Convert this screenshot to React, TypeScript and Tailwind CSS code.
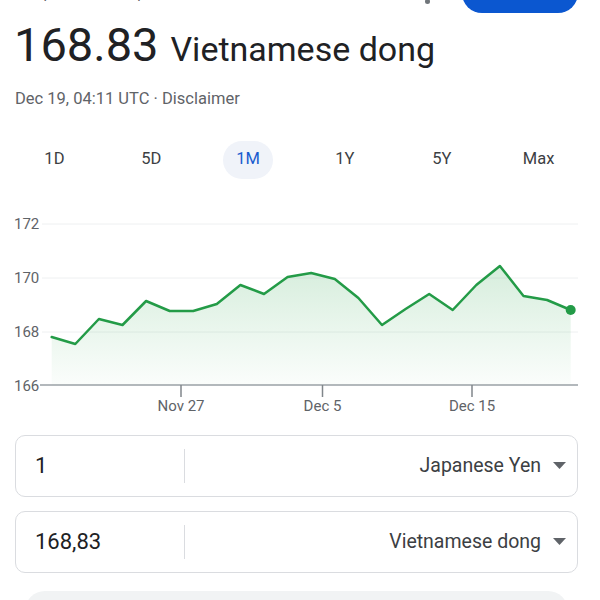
import React from "react";

const YS = [335, 342, 317, 323, 299, 309, 309, 302, 283, 292, 275, 271, 277, 296, 323, 307, 292, 308, 283, 264, 294, 298, 308];
const TOP = 205;
const X0 = 51.7;
const DX = (570.7 - 51.7) / 22;

function Chart() {
  const pts = YS.map((y, i) => [X0 + DX * i, y - TOP] as const);
  const line = pts.map(([x, y], i) => `${i === 0 ? "M" : "L"}${x.toFixed(1)},${y.toFixed(1)}`).join(" ");
  const base = 383 - TOP;
  const area = `${line} L${pts[pts.length - 1][0].toFixed(1)},${base} L${pts[0][0].toFixed(1)},${base} Z`;
  const last = pts[pts.length - 1];
  const labels = [
    { t: "172", y: 222 },
    { t: "170", y: 276 },
    { t: "168", y: 330 },
    { t: "166", y: 384 },
  ];
  const ticks = [
    { t: "Nov 27", x: 181 },
    { t: "Dec 5", x: 322.5 },
    { t: "Dec 15", x: 472 },
  ];
  return (
    <svg width="600" height="215" viewBox="0 0 600 215" className="block">
      <defs>
        <linearGradient id="g" x1="0" y1="0" x2="0" y2="1">
          <stop offset="0" stopColor="#34a853" stopOpacity="0.2" />
          <stop offset="1" stopColor="#34a853" stopOpacity="0.02" />
        </linearGradient>
      </defs>
      {labels.slice(0, 3).map((l) => (
        <line key={l.t} x1="42" x2="578" y1={l.y - TOP} y2={l.y - TOP} stroke="#eef0f1" strokeWidth="1" />
      ))}
      <path d={area} fill="url(#g)" />
      <line x1="40" x2="578" y1={base} y2={base} stroke="#9aa0a6" strokeWidth="1.5" />
      {ticks.map((t) => (
        <g key={t.t}>
          <line x1={t.x} x2={t.x} y1={base} y2={base + 12} stroke="#80868b" strokeWidth="1.5" />
          <text x={t.x} y={base + 26} textAnchor="middle" fontSize="15" fill="#5f6368" fontFamily="Roboto, sans-serif">
            {t.t}
          </text>
        </g>
      ))}
      {labels.map((l) => (
        <text key={l.t} x="14" y={l.y - TOP + 5} fontSize="15" fill="#5f6368" fontFamily="Roboto, sans-serif">
          {l.t}
        </text>
      ))}
      <path d={line} fill="none" stroke="#239b47" strokeWidth="2.5" strokeLinejoin="round" strokeLinecap="round" />
      <circle cx={last[0]} cy={last[1]} r="5" fill="#239b47" />
    </svg>
  );
}

function Caret() {
  return (
    <svg width="13" height="7" viewBox="0 0 13 7" className="block">
      <path d="M0 0 L13 0 L6.5 7 Z" fill="#5f6368" />
    </svg>
  );
}

function ConvBox({ value, currency }: { value: string; currency: string }) {
  return (
    <div className="flex h-[62px] items-center rounded-[10px] border border-[#dadce0]">
      <div className="w-[168px] pl-[19px] text-[22px] text-[#202124]">{value}</div>
      <div className="h-[34px] w-px bg-[#dadce0]" />
      <div className="flex flex-1 items-center justify-end gap-[12px] pr-[11px] text-[19.5px] text-[#3c4043]">
        <span>{currency}</span>
        <Caret />
      </div>
    </div>
  );
}

export default function App() {
  const tabs = ["1D", "5D", "1M", "1Y", "5Y", "Max"];
  return (
    <div className="h-[600px] w-[600px] overflow-hidden bg-white" style={{ fontFamily: "Roboto, 'Liberation Sans', sans-serif" }}>
      <div className="-mt-[27px] flex h-[40px] items-center pl-[15px] pr-[22px]">
        <span className="flex-1 text-[15px] text-[#5f6368]">1 Japanese Yen equals</span>
        <div className="mr-[32px] flex flex-col gap-[3px]">
          <span className="h-[5px] w-[5px] rounded-full bg-[#70757a]" />
          <span className="h-[5px] w-[5px] rounded-full bg-[#70757a]" />
          <span className="h-[5px] w-[5px] rounded-full bg-[#70757a]" />
        </div>
        <div className="h-[40px] w-[116px] rounded-full bg-[#0b57d0]" />
      </div>
      <div className="mt-[4px] flex items-baseline gap-[12px] pl-[14px] text-[#202124]">
        <span className="text-[47px] leading-[56px]">168.83</span>
        <span className="text-[34px]">Vietnamese dong</span>
      </div>
      <div className="mt-[12px] pl-[15px] text-[16.5px] text-[#5f6368]">Dec 19, 04:11 UTC · Disclaimer</div>
      <div className="mt-[29px] grid grid-cols-6 pl-[6px] pr-[13px]">
        {tabs.map((t) => (
          <div key={t} className="flex justify-center">
            <span
              className={
                t === "1M"
                  ? "flex h-[38px] min-w-[50px] items-center justify-center rounded-full bg-[#f0f3f9] px-[12px] text-[16.5px] text-[#1a5ccf]"
                  : "flex h-[38px] items-center justify-center px-[12px] text-[16.5px] text-[#3c4043]"
              }
            >
              {t}
            </span>
          </div>
        ))}
      </div>
      <div className="mt-[28px]">
        <Chart />
      </div>
      <div className="mt-[13px] flex flex-col gap-[14px] px-[15px] pr-[22px]">
        <ConvBox value="1" currency="Japanese Yen" />
        <ConvBox value="168,83" currency="Vietnamese dong" />
        <div className="mx-[10px] mt-[4px] h-[40px] rounded-t-[20px] bg-[#f1f3f4]" />
      </div>
    </div>
  );
}
